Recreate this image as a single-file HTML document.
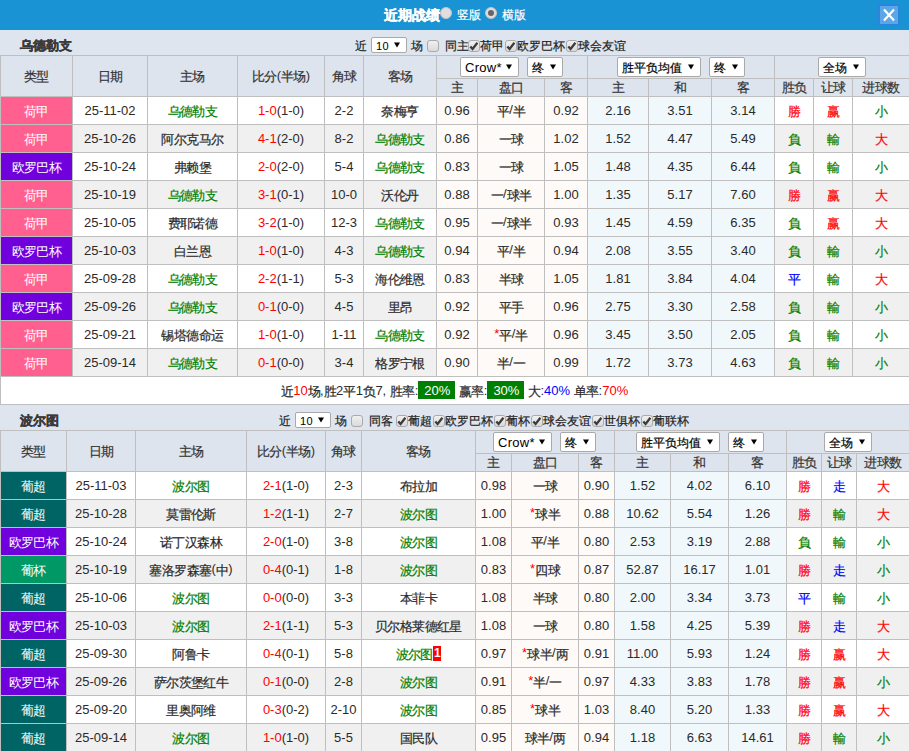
<!DOCTYPE html><html><head><meta charset="utf-8"><style>
*{margin:0;padding:0;box-sizing:border-box}
html,body{width:909px;height:751px;overflow:hidden;background:#dee5ee}
body{position:relative;font-family:"Liberation Sans",sans-serif;font-size:13px;color:#2a2a2a}
body>div,body>svg{position:absolute}
.c{display:flex;align-items:center;justify-content:center;white-space:nowrap;font-size:13px}
.t{white-space:nowrap;color:#222}
.sel{position:absolute;background:#fff;border:1px solid #a9a9a9;border-radius:2px;color:#000;white-space:nowrap}
.sel .st{position:absolute;left:4px;top:1px;font-size:13px;letter-spacing:0.3px}
.sel.small .st{font-size:11px;top:1px}
.sel i{font-size:12px;letter-spacing:0}
.tri{position:absolute}
i{font-style:normal;font-size:12.6px;letter-spacing:-0.6px;-webkit-text-stroke:0.2px currentColor}
.c i{position:relative;top:2px}
.t i{font-size:12px;letter-spacing:0}
.big i{font-size:inherit;top:0;letter-spacing:0;-webkit-text-stroke:0.35px currentColor}
.nost i{-webkit-text-stroke:0}
.up i{top:1px}
.sel i{font-size:12px;letter-spacing:0}
.cb{position:absolute;width:12px;height:12px;border:1px solid #aaa;border-radius:3px;background:linear-gradient(#f0f0f0,#dadada)}
.radio{position:absolute;width:12px;height:12px;border-radius:50%;background:#dedede;border:1px solid #c4c4c4}
.dot{position:absolute;left:2px;top:2px;width:6px;height:6px;border-radius:50%;background:#666}
.pct{background:#008000;color:#fff;padding:1px 5px 0 6px;line-height:17px;display:inline-block;font-size:13px}
.rc{background:#f00;color:#fff;font-size:12px;width:8px;text-align:center;line-height:15px;display:inline-block;margin-left:0.5px;font-weight:bold}
</style></head><body><div style="left:0px;top:0px;width:909px;height:30px;background:#1a93d4;"></div>
<div class="t big" style="left:384px;top:5px;font-size:14px;font-weight:bold;color:#fff;line-height:20px"><i>近期战绩</i></div>
<div class="radio" style="left:440px;top:7px"></div>
<div class="t" style="left:457px;top:5px;font-size:12px;color:#fff;line-height:20px"><i>竖版</i></div>
<div class="radio" style="left:485px;top:7px"><div class="dot"></div></div>
<div class="t" style="left:502px;top:5px;font-size:12px;color:#fff;line-height:20px"><i>横版</i></div>
<div style="left:878px;top:4px;width:22px;height:22px;background:#2a86dc;"></div>
<div style="left:880px;top:6px;width:18px;height:18px;background:#5aa6e9;"></div>
<svg style="position:absolute;left:880px;top:6px" width="18" height="18" viewBox="0 0 18 18"><path d="M4 3.5 L14 14.5 M14 3.5 L4 14.5" stroke="#fff" stroke-width="2.2"/></svg>
<div style="left:0px;top:30px;width:909px;height:25px;background:#dee5ee;"></div>
<div class="t big" style="left:20px;top:37px;font-size:13px;font-weight:bold;color:#3a3a3a;line-height:18px"><i>乌德勒支</i></div>
<div class="t" style="left:355px;top:37px;font-size:12px;line-height:18px"><i>近</i></div>
<div class="sel small" style="left:371px;top:37px;width:36px;height:16px"><span class="st" style="line-height:14px">10</span><svg class="tri" width="6" height="6" viewBox="0 0 6 6" style="left:22px;top:4px"><path d="M0 0.5 H6 L3 5.5 Z" fill="#000"/></svg></div>
<div class="t" style="left:411px;top:37px;font-size:12px;line-height:18px"><i>场</i></div>
<div class="cb" style="left:427px;top:40px"></div>
<div class="t" style="left:445px;top:37px;font-size:12px;line-height:18px"><i>同主</i></div>
<div class="cb" style="left:468px;top:40px"><svg width=10 height=10 viewBox='0 0 10 10' style='position:absolute;left:0;top:0'><path d='M1.3 5.4 L3.6 8 L8.4 1.8' stroke='#3c3c3c' stroke-width='2.3' fill='none'/></svg></div>
<div class="t" style="left:480px;top:37px;font-size:12px;line-height:18px"><i>荷甲</i></div>
<div class="cb" style="left:505px;top:40px"><svg width=10 height=10 viewBox='0 0 10 10' style='position:absolute;left:0;top:0'><path d='M1.3 5.4 L3.6 8 L8.4 1.8' stroke='#3c3c3c' stroke-width='2.3' fill='none'/></svg></div>
<div class="t" style="left:517px;top:37px;font-size:12px;line-height:18px"><i>欧罗巴杯</i></div>
<div class="cb" style="left:566px;top:40px"><svg width=10 height=10 viewBox='0 0 10 10' style='position:absolute;left:0;top:0'><path d='M1.3 5.4 L3.6 8 L8.4 1.8' stroke='#3c3c3c' stroke-width='2.3' fill='none'/></svg></div>
<div class="t" style="left:578px;top:37px;font-size:12px;line-height:18px"><i>球会友谊</i></div>
<div style="left:0px;top:55px;width:909px;height:41px;background:#dde4ed;"></div>
<div style="left:0px;top:96px;width:909px;height:28px;background:#ffffff;"></div>
<div style="left:436px;top:96px;width:151px;height:28px;background:#fdfaf8;"></div>
<div style="left:587px;top:96px;width:187px;height:28px;background:#f0f8fc;"></div>
<div style="left:1px;top:97px;width:71px;height:27px;background:#ff6090;"></div>
<div style="left:0px;top:124px;width:909px;height:28px;background:#f0f0f0;"></div>
<div style="left:436px;top:124px;width:151px;height:28px;background:#fdfaf8;"></div>
<div style="left:587px;top:124px;width:187px;height:28px;background:#f0f8fc;"></div>
<div style="left:1px;top:125px;width:71px;height:27px;background:#ff6090;"></div>
<div style="left:0px;top:152px;width:909px;height:28px;background:#ffffff;"></div>
<div style="left:436px;top:152px;width:151px;height:28px;background:#fdfaf8;"></div>
<div style="left:587px;top:152px;width:187px;height:28px;background:#f0f8fc;"></div>
<div style="left:1px;top:153px;width:71px;height:27px;background:#7000dc;"></div>
<div style="left:0px;top:180px;width:909px;height:28px;background:#f0f0f0;"></div>
<div style="left:436px;top:180px;width:151px;height:28px;background:#fdfaf8;"></div>
<div style="left:587px;top:180px;width:187px;height:28px;background:#f0f8fc;"></div>
<div style="left:1px;top:181px;width:71px;height:27px;background:#ff6090;"></div>
<div style="left:0px;top:208px;width:909px;height:28px;background:#ffffff;"></div>
<div style="left:436px;top:208px;width:151px;height:28px;background:#fdfaf8;"></div>
<div style="left:587px;top:208px;width:187px;height:28px;background:#f0f8fc;"></div>
<div style="left:1px;top:209px;width:71px;height:27px;background:#ff6090;"></div>
<div style="left:0px;top:236px;width:909px;height:28px;background:#f0f0f0;"></div>
<div style="left:436px;top:236px;width:151px;height:28px;background:#fdfaf8;"></div>
<div style="left:587px;top:236px;width:187px;height:28px;background:#f0f8fc;"></div>
<div style="left:1px;top:237px;width:71px;height:27px;background:#7000dc;"></div>
<div style="left:0px;top:264px;width:909px;height:28px;background:#ffffff;"></div>
<div style="left:436px;top:264px;width:151px;height:28px;background:#fdfaf8;"></div>
<div style="left:587px;top:264px;width:187px;height:28px;background:#f0f8fc;"></div>
<div style="left:1px;top:265px;width:71px;height:27px;background:#ff6090;"></div>
<div style="left:0px;top:292px;width:909px;height:28px;background:#f0f0f0;"></div>
<div style="left:436px;top:292px;width:151px;height:28px;background:#fdfaf8;"></div>
<div style="left:587px;top:292px;width:187px;height:28px;background:#f0f8fc;"></div>
<div style="left:1px;top:293px;width:71px;height:27px;background:#7000dc;"></div>
<div style="left:0px;top:320px;width:909px;height:28px;background:#ffffff;"></div>
<div style="left:436px;top:320px;width:151px;height:28px;background:#fdfaf8;"></div>
<div style="left:587px;top:320px;width:187px;height:28px;background:#f0f8fc;"></div>
<div style="left:1px;top:321px;width:71px;height:27px;background:#ff6090;"></div>
<div style="left:0px;top:348px;width:909px;height:28px;background:#f0f0f0;"></div>
<div style="left:436px;top:348px;width:151px;height:28px;background:#fdfaf8;"></div>
<div style="left:587px;top:348px;width:187px;height:28px;background:#f0f8fc;"></div>
<div style="left:1px;top:349px;width:71px;height:27px;background:#ff6090;"></div>
<div style="left:0px;top:376px;width:909px;height:28px;background:#ffffff;"></div>
<div style="left:0;top:55px;width:909px;height:1px;background:#bfbfbf"></div>
<div style="left:0;top:96px;width:909px;height:1px;background:#bfbfbf"></div>
<div style="left:0;top:124px;width:909px;height:1px;background:#bfbfbf"></div>
<div style="left:0;top:152px;width:909px;height:1px;background:#bfbfbf"></div>
<div style="left:0;top:180px;width:909px;height:1px;background:#bfbfbf"></div>
<div style="left:0;top:208px;width:909px;height:1px;background:#bfbfbf"></div>
<div style="left:0;top:236px;width:909px;height:1px;background:#bfbfbf"></div>
<div style="left:0;top:264px;width:909px;height:1px;background:#bfbfbf"></div>
<div style="left:0;top:292px;width:909px;height:1px;background:#bfbfbf"></div>
<div style="left:0;top:320px;width:909px;height:1px;background:#bfbfbf"></div>
<div style="left:0;top:348px;width:909px;height:1px;background:#bfbfbf"></div>
<div style="left:0;top:376px;width:909px;height:1px;background:#bfbfbf"></div>
<div style="left:436px;top:78px;width:473px;height:1px;background:#bfbfbf"></div>
<div style="left:0;top:404px;width:909px;height:1px;background:#bfbfbf"></div>
<div style="left:0px;top:55px;width:1px;height:321px;background:#bfbfbf"></div>
<div style="left:72px;top:55px;width:1px;height:321px;background:#bfbfbf"></div>
<div style="left:147px;top:55px;width:1px;height:321px;background:#bfbfbf"></div>
<div style="left:237px;top:55px;width:1px;height:321px;background:#bfbfbf"></div>
<div style="left:324px;top:55px;width:1px;height:321px;background:#bfbfbf"></div>
<div style="left:363px;top:55px;width:1px;height:321px;background:#bfbfbf"></div>
<div style="left:436px;top:55px;width:1px;height:321px;background:#bfbfbf"></div>
<div style="left:477px;top:78px;width:1px;height:298px;background:#bfbfbf"></div>
<div style="left:544px;top:78px;width:1px;height:298px;background:#bfbfbf"></div>
<div style="left:587px;top:55px;width:1px;height:321px;background:#bfbfbf"></div>
<div style="left:648px;top:78px;width:1px;height:298px;background:#bfbfbf"></div>
<div style="left:711px;top:78px;width:1px;height:298px;background:#bfbfbf"></div>
<div style="left:774px;top:55px;width:1px;height:321px;background:#bfbfbf"></div>
<div style="left:813px;top:78px;width:1px;height:298px;background:#bfbfbf"></div>
<div style="left:852px;top:78px;width:1px;height:298px;background:#bfbfbf"></div>
<div style="left:0;top:376px;width:1px;height:28px;background:#bfbfbf"></div>
<div class="c up" style="left:1px;top:56px;width:71px;height:40px;color:#333"><span><i>类型</i></span></div>
<div class="c up" style="left:73px;top:56px;width:74px;height:40px;color:#333"><span><i>日期</i></span></div>
<div class="c up" style="left:148px;top:56px;width:89px;height:40px;color:#333"><span><i>主场</i></span></div>
<div class="c up" style="left:238px;top:56px;width:86px;height:40px;color:#333"><span><i>比分</i>(<i>半场</i>)</span></div>
<div class="c up" style="left:325px;top:56px;width:38px;height:40px;color:#333"><span><i>角球</i></span></div>
<div class="c up" style="left:364px;top:56px;width:72px;height:40px;color:#333"><span><i>客场</i></span></div>
<div class="c up" style="left:437px;top:79px;width:40px;height:17px;color:#333"><span><i>主</i></span></div>
<div class="c up" style="left:478px;top:79px;width:66px;height:17px;color:#333"><span><i>盘口</i></span></div>
<div class="c up" style="left:545px;top:79px;width:42px;height:17px;color:#333"><span><i>客</i></span></div>
<div class="c up" style="left:588px;top:79px;width:60px;height:17px;color:#333"><span><i>主</i></span></div>
<div class="c up" style="left:649px;top:79px;width:62px;height:17px;color:#333"><span><i>和</i></span></div>
<div class="c up" style="left:712px;top:79px;width:62px;height:17px;color:#333"><span><i>客</i></span></div>
<div class="c up" style="left:775px;top:79px;width:38px;height:17px;color:#333"><span><i>胜负</i></span></div>
<div class="c up" style="left:814px;top:79px;width:38px;height:17px;color:#333"><span><i>让球</i></span></div>
<div class="c up" style="left:853px;top:79px;width:56px;height:17px;color:#333"><span><i>进球数</i></span></div>
<div class="c nost" style="left:1px;top:97px;width:71px;height:27px;color:#fff"><span><i>荷甲</i></span></div>
<div class="c " style="left:73px;top:97px;width:74px;height:27px;"><span>25-11-02</span></div>
<div class="c " style="left:148px;top:97px;width:89px;height:27px;"><span><span style="color:#008000"><i>乌德勒支</i></span></span></div>
<div class="c " style="left:238px;top:97px;width:86px;height:27px;"><span><span style="color:#ff0000">1-0</span>(1-0)</span></div>
<div class="c " style="left:325px;top:97px;width:38px;height:27px;"><span>2-2</span></div>
<div class="c " style="left:364px;top:97px;width:72px;height:27px;"><span><i>奈梅亨</i></span></div>
<div class="c " style="left:437px;top:97px;width:40px;height:27px;"><span>0.96</span></div>
<div class="c " style="left:478px;top:97px;width:66px;height:27px;"><span><i>平</i>/<i>半</i></span></div>
<div class="c " style="left:545px;top:97px;width:42px;height:27px;"><span>0.92</span></div>
<div class="c " style="left:588px;top:97px;width:60px;height:27px;"><span>2.16</span></div>
<div class="c " style="left:649px;top:97px;width:62px;height:27px;"><span>3.51</span></div>
<div class="c " style="left:712px;top:97px;width:62px;height:27px;"><span>3.14</span></div>
<div class="c " style="left:775px;top:97px;width:38px;height:27px;"><span><span style="color:#ff0000"><i>勝</i></span></span></div>
<div class="c " style="left:814px;top:97px;width:38px;height:27px;"><span><span style="color:#ff0000"><i>赢</i></span></span></div>
<div class="c " style="left:853px;top:97px;width:56px;height:27px;"><span><span style="color:#008000"><i>小</i></span></span></div>
<div class="c nost" style="left:1px;top:125px;width:71px;height:27px;color:#fff"><span><i>荷甲</i></span></div>
<div class="c " style="left:73px;top:125px;width:74px;height:27px;"><span>25-10-26</span></div>
<div class="c " style="left:148px;top:125px;width:89px;height:27px;"><span><i>阿尔克马尔</i></span></div>
<div class="c " style="left:238px;top:125px;width:86px;height:27px;"><span><span style="color:#ff0000">4-1</span>(2-0)</span></div>
<div class="c " style="left:325px;top:125px;width:38px;height:27px;"><span>8-2</span></div>
<div class="c " style="left:364px;top:125px;width:72px;height:27px;"><span><span style="color:#008000"><i>乌德勒支</i></span></span></div>
<div class="c " style="left:437px;top:125px;width:40px;height:27px;"><span>0.86</span></div>
<div class="c " style="left:478px;top:125px;width:66px;height:27px;"><span><i>一球</i></span></div>
<div class="c " style="left:545px;top:125px;width:42px;height:27px;"><span>1.02</span></div>
<div class="c " style="left:588px;top:125px;width:60px;height:27px;"><span>1.52</span></div>
<div class="c " style="left:649px;top:125px;width:62px;height:27px;"><span>4.47</span></div>
<div class="c " style="left:712px;top:125px;width:62px;height:27px;"><span>5.49</span></div>
<div class="c " style="left:775px;top:125px;width:38px;height:27px;"><span><span style="color:#008000"><i>負</i></span></span></div>
<div class="c " style="left:814px;top:125px;width:38px;height:27px;"><span><span style="color:#008000"><i>輸</i></span></span></div>
<div class="c " style="left:853px;top:125px;width:56px;height:27px;"><span><span style="color:#ff0000"><i>大</i></span></span></div>
<div class="c nost" style="left:1px;top:153px;width:71px;height:27px;color:#fff"><span><i>欧罗巴杯</i></span></div>
<div class="c " style="left:73px;top:153px;width:74px;height:27px;"><span>25-10-24</span></div>
<div class="c " style="left:148px;top:153px;width:89px;height:27px;"><span><i>弗赖堡</i></span></div>
<div class="c " style="left:238px;top:153px;width:86px;height:27px;"><span><span style="color:#ff0000">2-0</span>(2-0)</span></div>
<div class="c " style="left:325px;top:153px;width:38px;height:27px;"><span>5-4</span></div>
<div class="c " style="left:364px;top:153px;width:72px;height:27px;"><span><span style="color:#008000"><i>乌德勒支</i></span></span></div>
<div class="c " style="left:437px;top:153px;width:40px;height:27px;"><span>0.83</span></div>
<div class="c " style="left:478px;top:153px;width:66px;height:27px;"><span><i>一球</i></span></div>
<div class="c " style="left:545px;top:153px;width:42px;height:27px;"><span>1.05</span></div>
<div class="c " style="left:588px;top:153px;width:60px;height:27px;"><span>1.48</span></div>
<div class="c " style="left:649px;top:153px;width:62px;height:27px;"><span>4.35</span></div>
<div class="c " style="left:712px;top:153px;width:62px;height:27px;"><span>6.44</span></div>
<div class="c " style="left:775px;top:153px;width:38px;height:27px;"><span><span style="color:#008000"><i>負</i></span></span></div>
<div class="c " style="left:814px;top:153px;width:38px;height:27px;"><span><span style="color:#008000"><i>輸</i></span></span></div>
<div class="c " style="left:853px;top:153px;width:56px;height:27px;"><span><span style="color:#008000"><i>小</i></span></span></div>
<div class="c nost" style="left:1px;top:181px;width:71px;height:27px;color:#fff"><span><i>荷甲</i></span></div>
<div class="c " style="left:73px;top:181px;width:74px;height:27px;"><span>25-10-19</span></div>
<div class="c " style="left:148px;top:181px;width:89px;height:27px;"><span><span style="color:#008000"><i>乌德勒支</i></span></span></div>
<div class="c " style="left:238px;top:181px;width:86px;height:27px;"><span><span style="color:#ff0000">3-1</span>(0-1)</span></div>
<div class="c " style="left:325px;top:181px;width:38px;height:27px;"><span>10-0</span></div>
<div class="c " style="left:364px;top:181px;width:72px;height:27px;"><span><i>沃伦丹</i></span></div>
<div class="c " style="left:437px;top:181px;width:40px;height:27px;"><span>0.88</span></div>
<div class="c " style="left:478px;top:181px;width:66px;height:27px;"><span><i>一</i>/<i>球半</i></span></div>
<div class="c " style="left:545px;top:181px;width:42px;height:27px;"><span>1.00</span></div>
<div class="c " style="left:588px;top:181px;width:60px;height:27px;"><span>1.35</span></div>
<div class="c " style="left:649px;top:181px;width:62px;height:27px;"><span>5.17</span></div>
<div class="c " style="left:712px;top:181px;width:62px;height:27px;"><span>7.60</span></div>
<div class="c " style="left:775px;top:181px;width:38px;height:27px;"><span><span style="color:#ff0000"><i>勝</i></span></span></div>
<div class="c " style="left:814px;top:181px;width:38px;height:27px;"><span><span style="color:#ff0000"><i>赢</i></span></span></div>
<div class="c " style="left:853px;top:181px;width:56px;height:27px;"><span><span style="color:#ff0000"><i>大</i></span></span></div>
<div class="c nost" style="left:1px;top:209px;width:71px;height:27px;color:#fff"><span><i>荷甲</i></span></div>
<div class="c " style="left:73px;top:209px;width:74px;height:27px;"><span>25-10-05</span></div>
<div class="c " style="left:148px;top:209px;width:89px;height:27px;"><span><i>费耶诺德</i></span></div>
<div class="c " style="left:238px;top:209px;width:86px;height:27px;"><span><span style="color:#ff0000">3-2</span>(1-0)</span></div>
<div class="c " style="left:325px;top:209px;width:38px;height:27px;"><span>12-3</span></div>
<div class="c " style="left:364px;top:209px;width:72px;height:27px;"><span><span style="color:#008000"><i>乌德勒支</i></span></span></div>
<div class="c " style="left:437px;top:209px;width:40px;height:27px;"><span>0.95</span></div>
<div class="c " style="left:478px;top:209px;width:66px;height:27px;"><span><i>一</i>/<i>球半</i></span></div>
<div class="c " style="left:545px;top:209px;width:42px;height:27px;"><span>0.93</span></div>
<div class="c " style="left:588px;top:209px;width:60px;height:27px;"><span>1.45</span></div>
<div class="c " style="left:649px;top:209px;width:62px;height:27px;"><span>4.59</span></div>
<div class="c " style="left:712px;top:209px;width:62px;height:27px;"><span>6.35</span></div>
<div class="c " style="left:775px;top:209px;width:38px;height:27px;"><span><span style="color:#008000"><i>負</i></span></span></div>
<div class="c " style="left:814px;top:209px;width:38px;height:27px;"><span><span style="color:#ff0000"><i>赢</i></span></span></div>
<div class="c " style="left:853px;top:209px;width:56px;height:27px;"><span><span style="color:#ff0000"><i>大</i></span></span></div>
<div class="c nost" style="left:1px;top:237px;width:71px;height:27px;color:#fff"><span><i>欧罗巴杯</i></span></div>
<div class="c " style="left:73px;top:237px;width:74px;height:27px;"><span>25-10-03</span></div>
<div class="c " style="left:148px;top:237px;width:89px;height:27px;"><span><i>白兰恩</i></span></div>
<div class="c " style="left:238px;top:237px;width:86px;height:27px;"><span><span style="color:#ff0000">1-0</span>(1-0)</span></div>
<div class="c " style="left:325px;top:237px;width:38px;height:27px;"><span>4-3</span></div>
<div class="c " style="left:364px;top:237px;width:72px;height:27px;"><span><span style="color:#008000"><i>乌德勒支</i></span></span></div>
<div class="c " style="left:437px;top:237px;width:40px;height:27px;"><span>0.94</span></div>
<div class="c " style="left:478px;top:237px;width:66px;height:27px;"><span><i>平</i>/<i>半</i></span></div>
<div class="c " style="left:545px;top:237px;width:42px;height:27px;"><span>0.94</span></div>
<div class="c " style="left:588px;top:237px;width:60px;height:27px;"><span>2.08</span></div>
<div class="c " style="left:649px;top:237px;width:62px;height:27px;"><span>3.55</span></div>
<div class="c " style="left:712px;top:237px;width:62px;height:27px;"><span>3.40</span></div>
<div class="c " style="left:775px;top:237px;width:38px;height:27px;"><span><span style="color:#008000"><i>負</i></span></span></div>
<div class="c " style="left:814px;top:237px;width:38px;height:27px;"><span><span style="color:#008000"><i>輸</i></span></span></div>
<div class="c " style="left:853px;top:237px;width:56px;height:27px;"><span><span style="color:#008000"><i>小</i></span></span></div>
<div class="c nost" style="left:1px;top:265px;width:71px;height:27px;color:#fff"><span><i>荷甲</i></span></div>
<div class="c " style="left:73px;top:265px;width:74px;height:27px;"><span>25-09-28</span></div>
<div class="c " style="left:148px;top:265px;width:89px;height:27px;"><span><span style="color:#008000"><i>乌德勒支</i></span></span></div>
<div class="c " style="left:238px;top:265px;width:86px;height:27px;"><span><span style="color:#ff0000">2-2</span>(1-1)</span></div>
<div class="c " style="left:325px;top:265px;width:38px;height:27px;"><span>5-3</span></div>
<div class="c " style="left:364px;top:265px;width:72px;height:27px;"><span><i>海伦维恩</i></span></div>
<div class="c " style="left:437px;top:265px;width:40px;height:27px;"><span>0.83</span></div>
<div class="c " style="left:478px;top:265px;width:66px;height:27px;"><span><i>半球</i></span></div>
<div class="c " style="left:545px;top:265px;width:42px;height:27px;"><span>1.05</span></div>
<div class="c " style="left:588px;top:265px;width:60px;height:27px;"><span>1.81</span></div>
<div class="c " style="left:649px;top:265px;width:62px;height:27px;"><span>3.84</span></div>
<div class="c " style="left:712px;top:265px;width:62px;height:27px;"><span>4.04</span></div>
<div class="c " style="left:775px;top:265px;width:38px;height:27px;"><span><span style="color:#0000ff"><i>平</i></span></span></div>
<div class="c " style="left:814px;top:265px;width:38px;height:27px;"><span><span style="color:#008000"><i>輸</i></span></span></div>
<div class="c " style="left:853px;top:265px;width:56px;height:27px;"><span><span style="color:#ff0000"><i>大</i></span></span></div>
<div class="c nost" style="left:1px;top:293px;width:71px;height:27px;color:#fff"><span><i>欧罗巴杯</i></span></div>
<div class="c " style="left:73px;top:293px;width:74px;height:27px;"><span>25-09-26</span></div>
<div class="c " style="left:148px;top:293px;width:89px;height:27px;"><span><span style="color:#008000"><i>乌德勒支</i></span></span></div>
<div class="c " style="left:238px;top:293px;width:86px;height:27px;"><span><span style="color:#ff0000">0-1</span>(0-0)</span></div>
<div class="c " style="left:325px;top:293px;width:38px;height:27px;"><span>4-5</span></div>
<div class="c " style="left:364px;top:293px;width:72px;height:27px;"><span><i>里昂</i></span></div>
<div class="c " style="left:437px;top:293px;width:40px;height:27px;"><span>0.92</span></div>
<div class="c " style="left:478px;top:293px;width:66px;height:27px;"><span><i>平手</i></span></div>
<div class="c " style="left:545px;top:293px;width:42px;height:27px;"><span>0.96</span></div>
<div class="c " style="left:588px;top:293px;width:60px;height:27px;"><span>2.75</span></div>
<div class="c " style="left:649px;top:293px;width:62px;height:27px;"><span>3.30</span></div>
<div class="c " style="left:712px;top:293px;width:62px;height:27px;"><span>2.58</span></div>
<div class="c " style="left:775px;top:293px;width:38px;height:27px;"><span><span style="color:#008000"><i>負</i></span></span></div>
<div class="c " style="left:814px;top:293px;width:38px;height:27px;"><span><span style="color:#008000"><i>輸</i></span></span></div>
<div class="c " style="left:853px;top:293px;width:56px;height:27px;"><span><span style="color:#008000"><i>小</i></span></span></div>
<div class="c nost" style="left:1px;top:321px;width:71px;height:27px;color:#fff"><span><i>荷甲</i></span></div>
<div class="c " style="left:73px;top:321px;width:74px;height:27px;"><span>25-09-21</span></div>
<div class="c " style="left:148px;top:321px;width:89px;height:27px;"><span><i>锡塔德命运</i></span></div>
<div class="c " style="left:238px;top:321px;width:86px;height:27px;"><span><span style="color:#ff0000">1-0</span>(1-0)</span></div>
<div class="c " style="left:325px;top:321px;width:38px;height:27px;"><span>1-11</span></div>
<div class="c " style="left:364px;top:321px;width:72px;height:27px;"><span><span style="color:#008000"><i>乌德勒支</i></span></span></div>
<div class="c " style="left:437px;top:321px;width:40px;height:27px;"><span>0.92</span></div>
<div class="c " style="left:478px;top:321px;width:66px;height:27px;"><span><span style="color:#ff0000">*</span><i>平</i>/<i>半</i></span></div>
<div class="c " style="left:545px;top:321px;width:42px;height:27px;"><span>0.96</span></div>
<div class="c " style="left:588px;top:321px;width:60px;height:27px;"><span>3.45</span></div>
<div class="c " style="left:649px;top:321px;width:62px;height:27px;"><span>3.50</span></div>
<div class="c " style="left:712px;top:321px;width:62px;height:27px;"><span>2.05</span></div>
<div class="c " style="left:775px;top:321px;width:38px;height:27px;"><span><span style="color:#008000"><i>負</i></span></span></div>
<div class="c " style="left:814px;top:321px;width:38px;height:27px;"><span><span style="color:#008000"><i>輸</i></span></span></div>
<div class="c " style="left:853px;top:321px;width:56px;height:27px;"><span><span style="color:#008000"><i>小</i></span></span></div>
<div class="c nost" style="left:1px;top:349px;width:71px;height:27px;color:#fff"><span><i>荷甲</i></span></div>
<div class="c " style="left:73px;top:349px;width:74px;height:27px;"><span>25-09-14</span></div>
<div class="c " style="left:148px;top:349px;width:89px;height:27px;"><span><span style="color:#008000"><i>乌德勒支</i></span></span></div>
<div class="c " style="left:238px;top:349px;width:86px;height:27px;"><span><span style="color:#ff0000">0-1</span>(0-0)</span></div>
<div class="c " style="left:325px;top:349px;width:38px;height:27px;"><span>3-4</span></div>
<div class="c " style="left:364px;top:349px;width:72px;height:27px;"><span><i>格罗宁根</i></span></div>
<div class="c " style="left:437px;top:349px;width:40px;height:27px;"><span>0.90</span></div>
<div class="c " style="left:478px;top:349px;width:66px;height:27px;"><span><i>半</i>/<i>一</i></span></div>
<div class="c " style="left:545px;top:349px;width:42px;height:27px;"><span>0.99</span></div>
<div class="c " style="left:588px;top:349px;width:60px;height:27px;"><span>1.72</span></div>
<div class="c " style="left:649px;top:349px;width:62px;height:27px;"><span>3.73</span></div>
<div class="c " style="left:712px;top:349px;width:62px;height:27px;"><span>4.63</span></div>
<div class="c " style="left:775px;top:349px;width:38px;height:27px;"><span><span style="color:#008000"><i>負</i></span></span></div>
<div class="c " style="left:814px;top:349px;width:38px;height:27px;"><span><span style="color:#008000"><i>輸</i></span></span></div>
<div class="c " style="left:853px;top:349px;width:56px;height:27px;"><span><span style="color:#008000"><i>小</i></span></span></div>
<div class="sel" style="left:460px;top:57px;width:59px;height:20px"><span class="st" style="line-height:18px">Crow*</span><svg class="tri" width="6" height="6" viewBox="0 0 6 6" style="left:45px;top:6px"><path d="M0 0.5 H6 L3 5.5 Z" fill="#000"/></svg></div>
<div class="sel" style="left:527px;top:57px;width:36px;height:20px"><span class="st" style="line-height:18px"><i>终</i></span><svg class="tri" width="6" height="6" viewBox="0 0 6 6" style="left:22px;top:6px"><path d="M0 0.5 H6 L3 5.5 Z" fill="#000"/></svg></div>
<div class="sel" style="left:617px;top:57px;width:84px;height:20px"><span class="st" style="line-height:18px"><i>胜平负均值</i></span><svg class="tri" width="6" height="6" viewBox="0 0 6 6" style="left:70px;top:6px"><path d="M0 0.5 H6 L3 5.5 Z" fill="#000"/></svg></div>
<div class="sel" style="left:709px;top:57px;width:36px;height:20px"><span class="st" style="line-height:18px"><i>终</i></span><svg class="tri" width="6" height="6" viewBox="0 0 6 6" style="left:22px;top:6px"><path d="M0 0.5 H6 L3 5.5 Z" fill="#000"/></svg></div>
<div class="sel" style="left:818px;top:57px;width:48px;height:20px"><span class="st" style="line-height:18px"><i>全场</i></span><svg class="tri" width="6" height="6" viewBox="0 0 6 6" style="left:34px;top:6px"><path d="M0 0.5 H6 L3 5.5 Z" fill="#000"/></svg></div>
<div class="c up" style="left:0;top:377px;width:909px;height:27px"><span><i>近</i><span style="color:#f00">10</span><i>场</i>,<i>胜</i>2<i>平</i>1<i>负</i>7, <i>胜率</i>:<span class="pct">20%</span>&nbsp;<i>赢率</i>:<span class="pct">30%</span>&nbsp;<i>大</i>:<span style="color:#00f">40%</span>&nbsp;<i>单率</i>:<span style="color:#f00">70%</span></span></div>
<div style="left:0px;top:405px;width:909px;height:25px;background:#dee5ee;"></div>
<div class="t big" style="left:20px;top:412px;font-size:13px;font-weight:bold;color:#3a3a3a;line-height:18px"><i>波尔图</i></div>
<div class="t" style="left:279px;top:412px;font-size:12px;line-height:18px"><i>近</i></div>
<div class="sel small" style="left:295px;top:412px;width:36px;height:16px"><span class="st" style="line-height:14px">10</span><svg class="tri" width="6" height="6" viewBox="0 0 6 6" style="left:22px;top:4px"><path d="M0 0.5 H6 L3 5.5 Z" fill="#000"/></svg></div>
<div class="t" style="left:335px;top:412px;font-size:12px;line-height:18px"><i>场</i></div>
<div class="cb" style="left:351px;top:415px"></div>
<div class="t" style="left:369px;top:412px;font-size:12px;line-height:18px"><i>同客</i></div>
<div class="cb" style="left:396px;top:415px"><svg width=10 height=10 viewBox='0 0 10 10' style='position:absolute;left:0;top:0'><path d='M1.3 5.4 L3.6 8 L8.4 1.8' stroke='#3c3c3c' stroke-width='2.3' fill='none'/></svg></div>
<div class="t" style="left:408px;top:412px;font-size:12px;line-height:18px"><i>葡超</i></div>
<div class="cb" style="left:433px;top:415px"><svg width=10 height=10 viewBox='0 0 10 10' style='position:absolute;left:0;top:0'><path d='M1.3 5.4 L3.6 8 L8.4 1.8' stroke='#3c3c3c' stroke-width='2.3' fill='none'/></svg></div>
<div class="t" style="left:445px;top:412px;font-size:12px;line-height:18px"><i>欧罗巴杯</i></div>
<div class="cb" style="left:494px;top:415px"><svg width=10 height=10 viewBox='0 0 10 10' style='position:absolute;left:0;top:0'><path d='M1.3 5.4 L3.6 8 L8.4 1.8' stroke='#3c3c3c' stroke-width='2.3' fill='none'/></svg></div>
<div class="t" style="left:506px;top:412px;font-size:12px;line-height:18px"><i>葡杯</i></div>
<div class="cb" style="left:531px;top:415px"><svg width=10 height=10 viewBox='0 0 10 10' style='position:absolute;left:0;top:0'><path d='M1.3 5.4 L3.6 8 L8.4 1.8' stroke='#3c3c3c' stroke-width='2.3' fill='none'/></svg></div>
<div class="t" style="left:543px;top:412px;font-size:12px;line-height:18px"><i>球会友谊</i></div>
<div class="cb" style="left:592px;top:415px"><svg width=10 height=10 viewBox='0 0 10 10' style='position:absolute;left:0;top:0'><path d='M1.3 5.4 L3.6 8 L8.4 1.8' stroke='#3c3c3c' stroke-width='2.3' fill='none'/></svg></div>
<div class="t" style="left:604px;top:412px;font-size:12px;line-height:18px"><i>世俱杯</i></div>
<div class="cb" style="left:641px;top:415px"><svg width=10 height=10 viewBox='0 0 10 10' style='position:absolute;left:0;top:0'><path d='M1.3 5.4 L3.6 8 L8.4 1.8' stroke='#3c3c3c' stroke-width='2.3' fill='none'/></svg></div>
<div class="t" style="left:653px;top:412px;font-size:12px;line-height:18px"><i>葡联杯</i></div>
<div style="left:0px;top:430px;width:909px;height:41px;background:#dde4ed;"></div>
<div style="left:0px;top:471px;width:909px;height:28px;background:#ffffff;"></div>
<div style="left:475px;top:471px;width:139px;height:28px;background:#fdfaf8;"></div>
<div style="left:614px;top:471px;width:172px;height:28px;background:#f0f8fc;"></div>
<div style="left:1px;top:472px;width:65px;height:27px;background:#006464;"></div>
<div style="left:0px;top:499px;width:909px;height:28px;background:#f0f0f0;"></div>
<div style="left:475px;top:499px;width:139px;height:28px;background:#fdfaf8;"></div>
<div style="left:614px;top:499px;width:172px;height:28px;background:#f0f8fc;"></div>
<div style="left:1px;top:500px;width:65px;height:27px;background:#006464;"></div>
<div style="left:0px;top:527px;width:909px;height:28px;background:#ffffff;"></div>
<div style="left:475px;top:527px;width:139px;height:28px;background:#fdfaf8;"></div>
<div style="left:614px;top:527px;width:172px;height:28px;background:#f0f8fc;"></div>
<div style="left:1px;top:528px;width:65px;height:27px;background:#7000dc;"></div>
<div style="left:0px;top:555px;width:909px;height:28px;background:#f0f0f0;"></div>
<div style="left:475px;top:555px;width:139px;height:28px;background:#fdfaf8;"></div>
<div style="left:614px;top:555px;width:172px;height:28px;background:#f0f8fc;"></div>
<div style="left:1px;top:556px;width:65px;height:27px;background:#009966;"></div>
<div style="left:0px;top:583px;width:909px;height:28px;background:#ffffff;"></div>
<div style="left:475px;top:583px;width:139px;height:28px;background:#fdfaf8;"></div>
<div style="left:614px;top:583px;width:172px;height:28px;background:#f0f8fc;"></div>
<div style="left:1px;top:584px;width:65px;height:27px;background:#006464;"></div>
<div style="left:0px;top:611px;width:909px;height:28px;background:#f0f0f0;"></div>
<div style="left:475px;top:611px;width:139px;height:28px;background:#fdfaf8;"></div>
<div style="left:614px;top:611px;width:172px;height:28px;background:#f0f8fc;"></div>
<div style="left:1px;top:612px;width:65px;height:27px;background:#7000dc;"></div>
<div style="left:0px;top:639px;width:909px;height:28px;background:#ffffff;"></div>
<div style="left:475px;top:639px;width:139px;height:28px;background:#fdfaf8;"></div>
<div style="left:614px;top:639px;width:172px;height:28px;background:#f0f8fc;"></div>
<div style="left:1px;top:640px;width:65px;height:27px;background:#006464;"></div>
<div style="left:0px;top:667px;width:909px;height:28px;background:#f0f0f0;"></div>
<div style="left:475px;top:667px;width:139px;height:28px;background:#fdfaf8;"></div>
<div style="left:614px;top:667px;width:172px;height:28px;background:#f0f8fc;"></div>
<div style="left:1px;top:668px;width:65px;height:27px;background:#7000dc;"></div>
<div style="left:0px;top:695px;width:909px;height:28px;background:#ffffff;"></div>
<div style="left:475px;top:695px;width:139px;height:28px;background:#fdfaf8;"></div>
<div style="left:614px;top:695px;width:172px;height:28px;background:#f0f8fc;"></div>
<div style="left:1px;top:696px;width:65px;height:27px;background:#006464;"></div>
<div style="left:0px;top:723px;width:909px;height:28px;background:#f0f0f0;"></div>
<div style="left:475px;top:723px;width:139px;height:28px;background:#fdfaf8;"></div>
<div style="left:614px;top:723px;width:172px;height:28px;background:#f0f8fc;"></div>
<div style="left:1px;top:724px;width:65px;height:27px;background:#006464;"></div>
<div style="left:0;top:430px;width:909px;height:1px;background:#bfbfbf"></div>
<div style="left:0;top:471px;width:909px;height:1px;background:#bfbfbf"></div>
<div style="left:0;top:499px;width:909px;height:1px;background:#bfbfbf"></div>
<div style="left:0;top:527px;width:909px;height:1px;background:#bfbfbf"></div>
<div style="left:0;top:555px;width:909px;height:1px;background:#bfbfbf"></div>
<div style="left:0;top:583px;width:909px;height:1px;background:#bfbfbf"></div>
<div style="left:0;top:611px;width:909px;height:1px;background:#bfbfbf"></div>
<div style="left:0;top:639px;width:909px;height:1px;background:#bfbfbf"></div>
<div style="left:0;top:667px;width:909px;height:1px;background:#bfbfbf"></div>
<div style="left:0;top:695px;width:909px;height:1px;background:#bfbfbf"></div>
<div style="left:0;top:723px;width:909px;height:1px;background:#bfbfbf"></div>
<div style="left:0;top:751px;width:909px;height:1px;background:#bfbfbf"></div>
<div style="left:475px;top:453px;width:434px;height:1px;background:#bfbfbf"></div>
<div style="left:0px;top:430px;width:1px;height:321px;background:#bfbfbf"></div>
<div style="left:66px;top:430px;width:1px;height:321px;background:#bfbfbf"></div>
<div style="left:135px;top:430px;width:1px;height:321px;background:#bfbfbf"></div>
<div style="left:246px;top:430px;width:1px;height:321px;background:#bfbfbf"></div>
<div style="left:325px;top:430px;width:1px;height:321px;background:#bfbfbf"></div>
<div style="left:361px;top:430px;width:1px;height:321px;background:#bfbfbf"></div>
<div style="left:475px;top:430px;width:1px;height:321px;background:#bfbfbf"></div>
<div style="left:511px;top:453px;width:1px;height:298px;background:#bfbfbf"></div>
<div style="left:578px;top:453px;width:1px;height:298px;background:#bfbfbf"></div>
<div style="left:614px;top:430px;width:1px;height:321px;background:#bfbfbf"></div>
<div style="left:670px;top:453px;width:1px;height:298px;background:#bfbfbf"></div>
<div style="left:728px;top:453px;width:1px;height:298px;background:#bfbfbf"></div>
<div style="left:786px;top:430px;width:1px;height:321px;background:#bfbfbf"></div>
<div style="left:821px;top:453px;width:1px;height:298px;background:#bfbfbf"></div>
<div style="left:856px;top:453px;width:1px;height:298px;background:#bfbfbf"></div>
<div class="c up" style="left:1px;top:431px;width:65px;height:40px;color:#333"><span><i>类型</i></span></div>
<div class="c up" style="left:67px;top:431px;width:68px;height:40px;color:#333"><span><i>日期</i></span></div>
<div class="c up" style="left:136px;top:431px;width:110px;height:40px;color:#333"><span><i>主场</i></span></div>
<div class="c up" style="left:247px;top:431px;width:78px;height:40px;color:#333"><span><i>比分</i>(<i>半场</i>)</span></div>
<div class="c up" style="left:326px;top:431px;width:35px;height:40px;color:#333"><span><i>角球</i></span></div>
<div class="c up" style="left:362px;top:431px;width:113px;height:40px;color:#333"><span><i>客场</i></span></div>
<div class="c up" style="left:476px;top:454px;width:35px;height:17px;color:#333"><span><i>主</i></span></div>
<div class="c up" style="left:512px;top:454px;width:66px;height:17px;color:#333"><span><i>盘口</i></span></div>
<div class="c up" style="left:579px;top:454px;width:35px;height:17px;color:#333"><span><i>客</i></span></div>
<div class="c up" style="left:615px;top:454px;width:55px;height:17px;color:#333"><span><i>主</i></span></div>
<div class="c up" style="left:671px;top:454px;width:57px;height:17px;color:#333"><span><i>和</i></span></div>
<div class="c up" style="left:729px;top:454px;width:57px;height:17px;color:#333"><span><i>客</i></span></div>
<div class="c up" style="left:787px;top:454px;width:34px;height:17px;color:#333"><span><i>胜负</i></span></div>
<div class="c up" style="left:822px;top:454px;width:34px;height:17px;color:#333"><span><i>让球</i></span></div>
<div class="c up" style="left:857px;top:454px;width:52px;height:17px;color:#333"><span><i>进球数</i></span></div>
<div class="c nost" style="left:1px;top:472px;width:65px;height:27px;color:#fff"><span><i>葡超</i></span></div>
<div class="c " style="left:67px;top:472px;width:68px;height:27px;"><span>25-11-03</span></div>
<div class="c " style="left:136px;top:472px;width:110px;height:27px;"><span><span style="color:#008000"><i>波尔图</i></span></span></div>
<div class="c " style="left:247px;top:472px;width:78px;height:27px;"><span><span style="color:#ff0000">2-1</span>(1-0)</span></div>
<div class="c " style="left:326px;top:472px;width:35px;height:27px;"><span>2-3</span></div>
<div class="c " style="left:362px;top:472px;width:113px;height:27px;"><span><i>布拉加</i></span></div>
<div class="c " style="left:476px;top:472px;width:35px;height:27px;"><span>0.98</span></div>
<div class="c " style="left:512px;top:472px;width:66px;height:27px;"><span><i>一球</i></span></div>
<div class="c " style="left:579px;top:472px;width:35px;height:27px;"><span>0.90</span></div>
<div class="c " style="left:615px;top:472px;width:55px;height:27px;"><span>1.52</span></div>
<div class="c " style="left:671px;top:472px;width:57px;height:27px;"><span>4.02</span></div>
<div class="c " style="left:729px;top:472px;width:57px;height:27px;"><span>6.10</span></div>
<div class="c " style="left:787px;top:472px;width:34px;height:27px;"><span><span style="color:#ff0000"><i>勝</i></span></span></div>
<div class="c " style="left:822px;top:472px;width:34px;height:27px;"><span><span style="color:#0000ff"><i>走</i></span></span></div>
<div class="c " style="left:857px;top:472px;width:52px;height:27px;"><span><span style="color:#ff0000"><i>大</i></span></span></div>
<div class="c nost" style="left:1px;top:500px;width:65px;height:27px;color:#fff"><span><i>葡超</i></span></div>
<div class="c " style="left:67px;top:500px;width:68px;height:27px;"><span>25-10-28</span></div>
<div class="c " style="left:136px;top:500px;width:110px;height:27px;"><span><i>莫雷伦斯</i></span></div>
<div class="c " style="left:247px;top:500px;width:78px;height:27px;"><span><span style="color:#ff0000">1-2</span>(1-1)</span></div>
<div class="c " style="left:326px;top:500px;width:35px;height:27px;"><span>2-7</span></div>
<div class="c " style="left:362px;top:500px;width:113px;height:27px;"><span><span style="color:#008000"><i>波尔图</i></span></span></div>
<div class="c " style="left:476px;top:500px;width:35px;height:27px;"><span>1.00</span></div>
<div class="c " style="left:512px;top:500px;width:66px;height:27px;"><span><span style="color:#ff0000">*</span><i>球半</i></span></div>
<div class="c " style="left:579px;top:500px;width:35px;height:27px;"><span>0.88</span></div>
<div class="c " style="left:615px;top:500px;width:55px;height:27px;"><span>10.62</span></div>
<div class="c " style="left:671px;top:500px;width:57px;height:27px;"><span>5.54</span></div>
<div class="c " style="left:729px;top:500px;width:57px;height:27px;"><span>1.26</span></div>
<div class="c " style="left:787px;top:500px;width:34px;height:27px;"><span><span style="color:#ff0000"><i>勝</i></span></span></div>
<div class="c " style="left:822px;top:500px;width:34px;height:27px;"><span><span style="color:#008000"><i>輸</i></span></span></div>
<div class="c " style="left:857px;top:500px;width:52px;height:27px;"><span><span style="color:#ff0000"><i>大</i></span></span></div>
<div class="c nost" style="left:1px;top:528px;width:65px;height:27px;color:#fff"><span><i>欧罗巴杯</i></span></div>
<div class="c " style="left:67px;top:528px;width:68px;height:27px;"><span>25-10-24</span></div>
<div class="c " style="left:136px;top:528px;width:110px;height:27px;"><span><i>诺丁汉森林</i></span></div>
<div class="c " style="left:247px;top:528px;width:78px;height:27px;"><span><span style="color:#ff0000">2-0</span>(1-0)</span></div>
<div class="c " style="left:326px;top:528px;width:35px;height:27px;"><span>3-8</span></div>
<div class="c " style="left:362px;top:528px;width:113px;height:27px;"><span><span style="color:#008000"><i>波尔图</i></span></span></div>
<div class="c " style="left:476px;top:528px;width:35px;height:27px;"><span>1.08</span></div>
<div class="c " style="left:512px;top:528px;width:66px;height:27px;"><span><i>平</i>/<i>半</i></span></div>
<div class="c " style="left:579px;top:528px;width:35px;height:27px;"><span>0.80</span></div>
<div class="c " style="left:615px;top:528px;width:55px;height:27px;"><span>2.53</span></div>
<div class="c " style="left:671px;top:528px;width:57px;height:27px;"><span>3.19</span></div>
<div class="c " style="left:729px;top:528px;width:57px;height:27px;"><span>2.88</span></div>
<div class="c " style="left:787px;top:528px;width:34px;height:27px;"><span><span style="color:#008000"><i>負</i></span></span></div>
<div class="c " style="left:822px;top:528px;width:34px;height:27px;"><span><span style="color:#008000"><i>輸</i></span></span></div>
<div class="c " style="left:857px;top:528px;width:52px;height:27px;"><span><span style="color:#008000"><i>小</i></span></span></div>
<div class="c nost" style="left:1px;top:556px;width:65px;height:27px;color:#fff"><span><i>葡杯</i></span></div>
<div class="c " style="left:67px;top:556px;width:68px;height:27px;"><span>25-10-19</span></div>
<div class="c " style="left:136px;top:556px;width:110px;height:27px;"><span><i>塞洛罗森塞</i>(<i>中</i>)</span></div>
<div class="c " style="left:247px;top:556px;width:78px;height:27px;"><span><span style="color:#ff0000">0-4</span>(0-1)</span></div>
<div class="c " style="left:326px;top:556px;width:35px;height:27px;"><span>1-8</span></div>
<div class="c " style="left:362px;top:556px;width:113px;height:27px;"><span><span style="color:#008000"><i>波尔图</i></span></span></div>
<div class="c " style="left:476px;top:556px;width:35px;height:27px;"><span>0.83</span></div>
<div class="c " style="left:512px;top:556px;width:66px;height:27px;"><span><span style="color:#ff0000">*</span><i>四球</i></span></div>
<div class="c " style="left:579px;top:556px;width:35px;height:27px;"><span>0.87</span></div>
<div class="c " style="left:615px;top:556px;width:55px;height:27px;"><span>52.87</span></div>
<div class="c " style="left:671px;top:556px;width:57px;height:27px;"><span>16.17</span></div>
<div class="c " style="left:729px;top:556px;width:57px;height:27px;"><span>1.01</span></div>
<div class="c " style="left:787px;top:556px;width:34px;height:27px;"><span><span style="color:#ff0000"><i>勝</i></span></span></div>
<div class="c " style="left:822px;top:556px;width:34px;height:27px;"><span><span style="color:#0000ff"><i>走</i></span></span></div>
<div class="c " style="left:857px;top:556px;width:52px;height:27px;"><span><span style="color:#008000"><i>小</i></span></span></div>
<div class="c nost" style="left:1px;top:584px;width:65px;height:27px;color:#fff"><span><i>葡超</i></span></div>
<div class="c " style="left:67px;top:584px;width:68px;height:27px;"><span>25-10-06</span></div>
<div class="c " style="left:136px;top:584px;width:110px;height:27px;"><span><span style="color:#008000"><i>波尔图</i></span></span></div>
<div class="c " style="left:247px;top:584px;width:78px;height:27px;"><span><span style="color:#ff0000">0-0</span>(0-0)</span></div>
<div class="c " style="left:326px;top:584px;width:35px;height:27px;"><span>3-3</span></div>
<div class="c " style="left:362px;top:584px;width:113px;height:27px;"><span><i>本菲卡</i></span></div>
<div class="c " style="left:476px;top:584px;width:35px;height:27px;"><span>1.08</span></div>
<div class="c " style="left:512px;top:584px;width:66px;height:27px;"><span><i>半球</i></span></div>
<div class="c " style="left:579px;top:584px;width:35px;height:27px;"><span>0.80</span></div>
<div class="c " style="left:615px;top:584px;width:55px;height:27px;"><span>2.00</span></div>
<div class="c " style="left:671px;top:584px;width:57px;height:27px;"><span>3.34</span></div>
<div class="c " style="left:729px;top:584px;width:57px;height:27px;"><span>3.73</span></div>
<div class="c " style="left:787px;top:584px;width:34px;height:27px;"><span><span style="color:#0000ff"><i>平</i></span></span></div>
<div class="c " style="left:822px;top:584px;width:34px;height:27px;"><span><span style="color:#008000"><i>輸</i></span></span></div>
<div class="c " style="left:857px;top:584px;width:52px;height:27px;"><span><span style="color:#008000"><i>小</i></span></span></div>
<div class="c nost" style="left:1px;top:612px;width:65px;height:27px;color:#fff"><span><i>欧罗巴杯</i></span></div>
<div class="c " style="left:67px;top:612px;width:68px;height:27px;"><span>25-10-03</span></div>
<div class="c " style="left:136px;top:612px;width:110px;height:27px;"><span><span style="color:#008000"><i>波尔图</i></span></span></div>
<div class="c " style="left:247px;top:612px;width:78px;height:27px;"><span><span style="color:#ff0000">2-1</span>(1-1)</span></div>
<div class="c " style="left:326px;top:612px;width:35px;height:27px;"><span>5-3</span></div>
<div class="c " style="left:362px;top:612px;width:113px;height:27px;"><span><i>贝尔格莱德红星</i></span></div>
<div class="c " style="left:476px;top:612px;width:35px;height:27px;"><span>1.08</span></div>
<div class="c " style="left:512px;top:612px;width:66px;height:27px;"><span><i>一球</i></span></div>
<div class="c " style="left:579px;top:612px;width:35px;height:27px;"><span>0.80</span></div>
<div class="c " style="left:615px;top:612px;width:55px;height:27px;"><span>1.58</span></div>
<div class="c " style="left:671px;top:612px;width:57px;height:27px;"><span>4.25</span></div>
<div class="c " style="left:729px;top:612px;width:57px;height:27px;"><span>5.39</span></div>
<div class="c " style="left:787px;top:612px;width:34px;height:27px;"><span><span style="color:#ff0000"><i>勝</i></span></span></div>
<div class="c " style="left:822px;top:612px;width:34px;height:27px;"><span><span style="color:#0000ff"><i>走</i></span></span></div>
<div class="c " style="left:857px;top:612px;width:52px;height:27px;"><span><span style="color:#ff0000"><i>大</i></span></span></div>
<div class="c nost" style="left:1px;top:640px;width:65px;height:27px;color:#fff"><span><i>葡超</i></span></div>
<div class="c " style="left:67px;top:640px;width:68px;height:27px;"><span>25-09-30</span></div>
<div class="c " style="left:136px;top:640px;width:110px;height:27px;"><span><i>阿鲁卡</i></span></div>
<div class="c " style="left:247px;top:640px;width:78px;height:27px;"><span><span style="color:#ff0000">0-4</span>(0-1)</span></div>
<div class="c " style="left:326px;top:640px;width:35px;height:27px;"><span>5-8</span></div>
<div class="c " style="left:362px;top:640px;width:113px;height:27px;"><span><span style="color:#008000"><i>波尔图</i></span><span class="rc">1</span></span></div>
<div class="c " style="left:476px;top:640px;width:35px;height:27px;"><span>0.97</span></div>
<div class="c " style="left:512px;top:640px;width:66px;height:27px;"><span><span style="color:#ff0000">*</span><i>球半</i>/<i>两</i></span></div>
<div class="c " style="left:579px;top:640px;width:35px;height:27px;"><span>0.91</span></div>
<div class="c " style="left:615px;top:640px;width:55px;height:27px;"><span>11.00</span></div>
<div class="c " style="left:671px;top:640px;width:57px;height:27px;"><span>5.93</span></div>
<div class="c " style="left:729px;top:640px;width:57px;height:27px;"><span>1.24</span></div>
<div class="c " style="left:787px;top:640px;width:34px;height:27px;"><span><span style="color:#ff0000"><i>勝</i></span></span></div>
<div class="c " style="left:822px;top:640px;width:34px;height:27px;"><span><span style="color:#ff0000"><i>赢</i></span></span></div>
<div class="c " style="left:857px;top:640px;width:52px;height:27px;"><span><span style="color:#ff0000"><i>大</i></span></span></div>
<div class="c nost" style="left:1px;top:668px;width:65px;height:27px;color:#fff"><span><i>欧罗巴杯</i></span></div>
<div class="c " style="left:67px;top:668px;width:68px;height:27px;"><span>25-09-26</span></div>
<div class="c " style="left:136px;top:668px;width:110px;height:27px;"><span><i>萨尔茨堡红牛</i></span></div>
<div class="c " style="left:247px;top:668px;width:78px;height:27px;"><span><span style="color:#ff0000">0-1</span>(0-0)</span></div>
<div class="c " style="left:326px;top:668px;width:35px;height:27px;"><span>2-8</span></div>
<div class="c " style="left:362px;top:668px;width:113px;height:27px;"><span><span style="color:#008000"><i>波尔图</i></span></span></div>
<div class="c " style="left:476px;top:668px;width:35px;height:27px;"><span>0.91</span></div>
<div class="c " style="left:512px;top:668px;width:66px;height:27px;"><span><span style="color:#ff0000">*</span><i>半</i>/<i>一</i></span></div>
<div class="c " style="left:579px;top:668px;width:35px;height:27px;"><span>0.97</span></div>
<div class="c " style="left:615px;top:668px;width:55px;height:27px;"><span>4.33</span></div>
<div class="c " style="left:671px;top:668px;width:57px;height:27px;"><span>3.83</span></div>
<div class="c " style="left:729px;top:668px;width:57px;height:27px;"><span>1.78</span></div>
<div class="c " style="left:787px;top:668px;width:34px;height:27px;"><span><span style="color:#ff0000"><i>勝</i></span></span></div>
<div class="c " style="left:822px;top:668px;width:34px;height:27px;"><span><span style="color:#ff0000"><i>赢</i></span></span></div>
<div class="c " style="left:857px;top:668px;width:52px;height:27px;"><span><span style="color:#008000"><i>小</i></span></span></div>
<div class="c nost" style="left:1px;top:696px;width:65px;height:27px;color:#fff"><span><i>葡超</i></span></div>
<div class="c " style="left:67px;top:696px;width:68px;height:27px;"><span>25-09-20</span></div>
<div class="c " style="left:136px;top:696px;width:110px;height:27px;"><span><i>里奥阿维</i></span></div>
<div class="c " style="left:247px;top:696px;width:78px;height:27px;"><span><span style="color:#ff0000">0-3</span>(0-2)</span></div>
<div class="c " style="left:326px;top:696px;width:35px;height:27px;"><span>2-10</span></div>
<div class="c " style="left:362px;top:696px;width:113px;height:27px;"><span><span style="color:#008000"><i>波尔图</i></span></span></div>
<div class="c " style="left:476px;top:696px;width:35px;height:27px;"><span>0.85</span></div>
<div class="c " style="left:512px;top:696px;width:66px;height:27px;"><span><span style="color:#ff0000">*</span><i>球半</i></span></div>
<div class="c " style="left:579px;top:696px;width:35px;height:27px;"><span>1.03</span></div>
<div class="c " style="left:615px;top:696px;width:55px;height:27px;"><span>8.40</span></div>
<div class="c " style="left:671px;top:696px;width:57px;height:27px;"><span>5.20</span></div>
<div class="c " style="left:729px;top:696px;width:57px;height:27px;"><span>1.33</span></div>
<div class="c " style="left:787px;top:696px;width:34px;height:27px;"><span><span style="color:#ff0000"><i>勝</i></span></span></div>
<div class="c " style="left:822px;top:696px;width:34px;height:27px;"><span><span style="color:#ff0000"><i>赢</i></span></span></div>
<div class="c " style="left:857px;top:696px;width:52px;height:27px;"><span><span style="color:#ff0000"><i>大</i></span></span></div>
<div class="c nost" style="left:1px;top:724px;width:65px;height:27px;color:#fff"><span><i>葡超</i></span></div>
<div class="c " style="left:67px;top:724px;width:68px;height:27px;"><span>25-09-14</span></div>
<div class="c " style="left:136px;top:724px;width:110px;height:27px;"><span><span style="color:#008000"><i>波尔图</i></span></span></div>
<div class="c " style="left:247px;top:724px;width:78px;height:27px;"><span><span style="color:#ff0000">1-0</span>(1-0)</span></div>
<div class="c " style="left:326px;top:724px;width:35px;height:27px;"><span>5-5</span></div>
<div class="c " style="left:362px;top:724px;width:113px;height:27px;"><span><i>国民队</i></span></div>
<div class="c " style="left:476px;top:724px;width:35px;height:27px;"><span>0.95</span></div>
<div class="c " style="left:512px;top:724px;width:66px;height:27px;"><span><i>球半</i>/<i>两</i></span></div>
<div class="c " style="left:579px;top:724px;width:35px;height:27px;"><span>0.94</span></div>
<div class="c " style="left:615px;top:724px;width:55px;height:27px;"><span>1.18</span></div>
<div class="c " style="left:671px;top:724px;width:57px;height:27px;"><span>6.63</span></div>
<div class="c " style="left:729px;top:724px;width:57px;height:27px;"><span>14.61</span></div>
<div class="c " style="left:787px;top:724px;width:34px;height:27px;"><span><span style="color:#ff0000"><i>勝</i></span></span></div>
<div class="c " style="left:822px;top:724px;width:34px;height:27px;"><span><span style="color:#008000"><i>輸</i></span></span></div>
<div class="c " style="left:857px;top:724px;width:52px;height:27px;"><span><span style="color:#008000"><i>小</i></span></span></div>
<div class="sel" style="left:493px;top:432px;width:59px;height:20px"><span class="st" style="line-height:18px">Crow*</span><svg class="tri" width="6" height="6" viewBox="0 0 6 6" style="left:45px;top:6px"><path d="M0 0.5 H6 L3 5.5 Z" fill="#000"/></svg></div>
<div class="sel" style="left:560px;top:432px;width:36px;height:20px"><span class="st" style="line-height:18px"><i>终</i></span><svg class="tri" width="6" height="6" viewBox="0 0 6 6" style="left:22px;top:6px"><path d="M0 0.5 H6 L3 5.5 Z" fill="#000"/></svg></div>
<div class="sel" style="left:636px;top:432px;width:84px;height:20px"><span class="st" style="line-height:18px"><i>胜平负均值</i></span><svg class="tri" width="6" height="6" viewBox="0 0 6 6" style="left:70px;top:6px"><path d="M0 0.5 H6 L3 5.5 Z" fill="#000"/></svg></div>
<div class="sel" style="left:728px;top:432px;width:36px;height:20px"><span class="st" style="line-height:18px"><i>终</i></span><svg class="tri" width="6" height="6" viewBox="0 0 6 6" style="left:22px;top:6px"><path d="M0 0.5 H6 L3 5.5 Z" fill="#000"/></svg></div>
<div class="sel" style="left:824px;top:432px;width:48px;height:20px"><span class="st" style="line-height:18px"><i>全场</i></span><svg class="tri" width="6" height="6" viewBox="0 0 6 6" style="left:34px;top:6px"><path d="M0 0.5 H6 L3 5.5 Z" fill="#000"/></svg></div></body></html>
